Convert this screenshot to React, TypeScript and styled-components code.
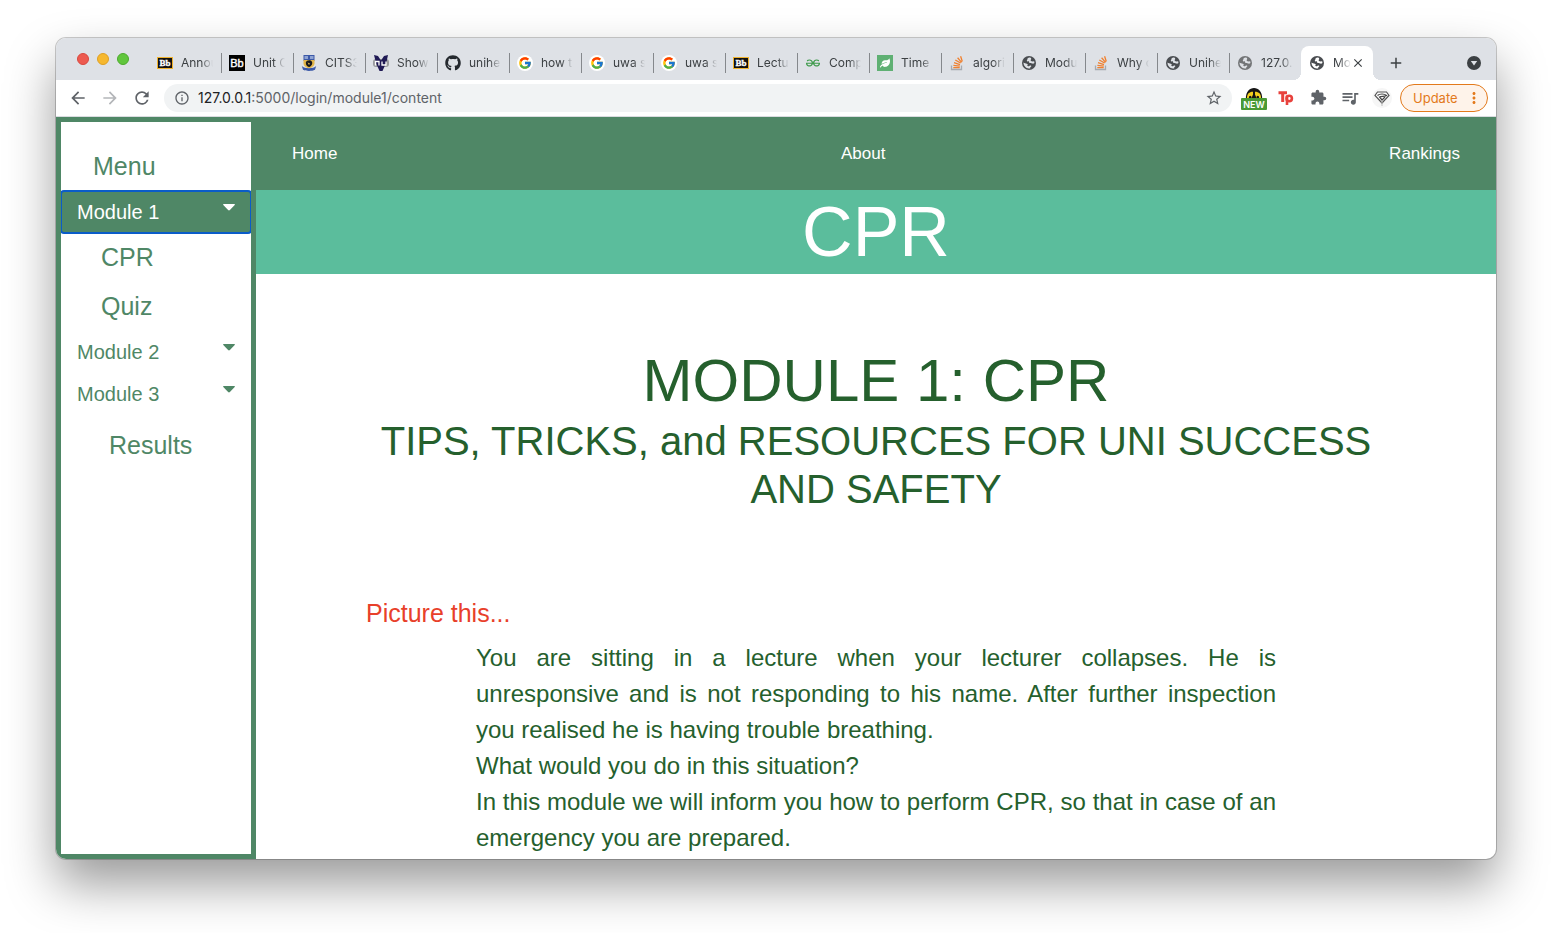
import React from "react";
import styled, { createGlobalStyle, css } from "styled-components";
import {
  MdArrowBack,
  MdArrowForward,
  MdRefresh,
  MdInfoOutline,
  MdStarBorder,
  MdExtension,
  MdQueueMusic,
  MdMoreVert,
  MdAdd,
  MdClose,
} from "react-icons/md";
import { FaGithub, FaLeaf } from "react-icons/fa";
import { FcGoogle } from "react-icons/fc";
import { SiGeeksforgeeks } from "react-icons/si";

const green = "#4f8766";
const darkGreen = "#25602d";

const GlobalStyle = createGlobalStyle`
  *, *::before, *::after { box-sizing: border-box; }
  body { margin: 0; background: #fff; font-family: "Liberation Sans", Arial, sans-serif; }
  button, input { font-family: inherit; }
  h1, h2, h3, p { margin: 0; font-weight: 400; }
`;

const Desktop = styled.div`
  display: flex;
  min-height: 100vh;
  padding: 38px 56px 74px;
`;

const Window = styled.div`
  flex: 1;
  min-width: 0;
  display: flex;
  flex-direction: column;
  overflow: hidden;
  border-radius: 10px;
  background: #fff;
  box-shadow: 0 0 0 1px rgba(0, 0, 0, 0.2), 0 25px 50px rgba(0, 0, 0, 0.4);
`;

/* Browser chrome */

const TabStrip = styled.div`
  display: flex;
  align-items: flex-end;
  height: 42px;
  padding: 0 14px 0 21px;
  background: #dee1e6;
  font-family: Inter, sans-serif;
`;

const Lights = styled.div`
  display: flex;
  gap: 8px;
  align-self: center;
  margin-right: 20px;
`;

const Light = styled.button<{ $fill: string; $edge: string }>`
  width: 12px;
  height: 12px;
  padding: 0;
  border: 1px solid ${(p) => p.$edge};
  border-radius: 50%;
  background: ${(p) => p.$fill};
`;

const Tab = styled.div<{ $active?: boolean; $first?: boolean }>`
  position: relative;
  display: flex;
  align-items: center;
  width: 72px;
  height: 34px;
  padding: 0 8px;
  color: #3c4043;
  ${(p) =>
    p.$active
      ? css`
          border-radius: 8px 8px 0 0;
          background: #fff;
          &::before,
          &::after {
            content: "";
            position: absolute;
            bottom: 0;
            width: 8px;
            height: 8px;
          }
          &::before {
            left: -8px;
            background: radial-gradient(circle at 0 0, transparent 8px, #fff 8px);
          }
          &::after {
            right: -8px;
            background: radial-gradient(circle at 100% 0, transparent 8px, #fff 8px);
          }
        `
      : !p.$first &&
        css`
          &::before {
            content: "";
            position: absolute;
            left: 0;
            top: 7px;
            width: 1px;
            height: 20px;
            background: #85888c;
          }
        `}
`;

const Favicon = styled.span`
  display: flex;
  flex: none;
  align-items: center;
  justify-content: center;
  width: 16px;
  height: 16px;
`;

const Badge = styled(Favicon)<{ $fill: string; $round?: boolean }>`
  border-radius: ${(p) => (p.$round ? 8 : 0)}px;
  background: ${(p) => p.$fill};
`;

const TabTitle = styled.button`
  flex: 1;
  min-width: 0;
  margin-left: 8px;
  padding: 0;
  border: 0;
  background: none;
  overflow: hidden;
  color: inherit;
  font-size: 12px;
  line-height: 16px;
  text-align: left;
  white-space: nowrap;
  mask-image: linear-gradient(to left, transparent, #000 12px);
`;

const IconButton = styled.button<{ $color?: string; $width?: number }>`
  display: flex;
  flex: none;
  align-items: center;
  justify-content: center;
  width: ${(p) => p.$width ?? 32}px;
  height: 28px;
  padding: 0;
  border: 0;
  background: none;
  color: ${(p) => p.$color ?? "#5f6368"};
`;

const StripButton = styled(IconButton)`
  height: 34px;
`;

const Spacer = styled.div`
  flex: 1;
`;

const Toolbar = styled.div`
  display: flex;
  align-items: center;
  height: 37px;
  padding: 0 8px 1px 6px;
  border-bottom: 1px solid #dadce0;
  font-family: Inter, sans-serif;
`;

const AddressBar = styled.div`
  display: flex;
  flex: 1;
  align-items: center;
  height: 28px;
  margin: 0 6px;
  padding: 0 2px 0 10px;
  border-radius: 14px;
  background: #f1f3f4;
  color: #5f6368;
`;

const Address = styled.div`
  flex: 1;
  margin-left: 8px;
  font-size: 14px;
  line-height: 20px;
`;

const Host = styled.span`
  color: #202124;
`;

const UpdateButton = styled.button`
  display: flex;
  align-items: center;
  justify-content: space-between;
  width: 88px;
  height: 28px;
  margin-left: 2px;
  padding: 0 4px 0 12px;
  border: 1px solid #e37a1c;
  border-radius: 14px;
  background: #fef3ea;
  color: #e37a1c;
  font-size: 13px;
`;

/* Web page */

const Page = styled.div`
  display: flex;
  flex: 1;
`;

const Sidebar = styled.nav`
  display: flex;
  flex-direction: column;
  flex: none;
  width: 200px;
  padding-top: 20px;
  border: 5px solid ${green};
  overflow: hidden;
`;

const MenuLink = styled.a<{ $indent: number }>`
  padding: 6px 8px 6px ${(p) => p.$indent}px;
  color: ${green};
  font-size: 25px;
  line-height: 37px;
  text-decoration: none;
`;

const Submenu = styled.div`
  display: flex;
  flex-direction: column;
`;

const ModuleButton = styled.button<{ $open?: boolean }>`
  display: flex;
  flex: none;
  justify-content: space-between;
  padding: 6px 16px;
  border: 0;
  border-radius: ${(p) => (p.$open ? 3 : 0)}px;
  outline: ${(p) => (p.$open ? "2px solid #0a5cc8" : "none")};
  outline-offset: -1px;
  background: ${(p) => (p.$open ? green : "transparent")};
  color: ${(p) => (p.$open ? "#fff" : green)};
  font-size: 20px;
  line-height: 30px;
`;

const CaretIcon = styled.svg`
  width: 12px;
  height: 20px;
`;

const ResultsGroup = styled.div`
  display: flex;
  flex-direction: column;
  padding-top: 6px;
`;

const Content = styled.div`
  flex: 1;
  min-width: 0;
`;

const TopNav = styled.nav`
  display: flex;
  align-items: center;
  justify-content: space-between;
  height: 73px;
  padding: 0 36px;
  background: ${green};
`;

const NavLink = styled.a`
  color: #fff;
  font-size: 17px;
  line-height: 26px;
  text-decoration: none;
`;

const Banner = styled.h1`
  background: #5bbd9c;
  color: #fff;
  font-size: 70px;
  line-height: 84px;
  text-align: center;
`;

const Article = styled.main`
  padding: 71px 110px 0;
  color: ${darkGreen};
`;

const Title = styled.h2`
  font-size: 60px;
  line-height: 72px;
  text-align: center;
`;

const Subtitle = styled.h3`
  font-size: 40px;
  line-height: 48px;
  text-align: center;
`;

const Lead = styled.p`
  margin: 85px 0 12px;
  color: #e8402a;
  font-size: 25px;
  line-height: 30px;
`;

const Scenario = styled.div`
  padding: 0 110px;
  font-size: 24px;
  line-height: 36px;
  text-align: justify;
`;

/* Favicons and extension icons */

const GlobeIcon = ({ color = "#4a4d51", land = "#dee1e6" }: { color?: string; land?: string }) => (
  <svg width="16" height="16" viewBox="0 0 16 16" aria-hidden="true">
    <circle cx="8" cy="8" r="7" fill={color} />
    <path
      d="M9.600 2.700C8.400 2.400 7.400 2.600 6.800 3.200C6 4 6.600 4.800 6 5.300C5.300 5.900 6.300 6.800 7 6.400C7.700 6 8.300 6.600 8 7.200C8.600 8.400 10.300 8.100 11.200 8.500C12.100 8.900 12.700 8.500 13.400 8.100C13.500 7.300 13.300 6.500 13 5.900C12.400 6.500 11.400 6.500 10.500 6.300C9.600 6 9.500 5.200 9.900 4.600C10.400 4 10.300 3.300 9.600 2.700Z"
      fill={land}
    />
    <path
      d="M2.500 7.600C2.400 8.700 2.700 9.700 3.200 10.600C3.800 11.500 4.500 12.200 5.200 12.700C6.600 13.500 8 13.700 9.300 13.300C8.900 12.600 9.500 12.200 10.200 11.600C10.600 10.900 9.900 10.300 9.100 10.500C8.300 10.600 8.100 11.200 7.300 11.300C6.400 11.400 6 10.700 6.500 10.100C7 9.500 6.700 8.900 5.800 8.700C4.700 8.500 3.600 8.500 2.500 7.600Z"
      fill={land}
    />
  </svg>
);

const BlackboardIcon = () => (
  <svg width="16" height="12" viewBox="0 0 16 12" aria-hidden="true">
    <rect width="16" height="12" fill="#efb22d" />
    <rect x="1" y="1" width="14" height="10" fill="#111" />
    <text x="8" y="9" textAnchor="middle" fontFamily="Liberation Serif, serif" fontWeight="700" fontSize="9" fill="#fff" stroke="#fff" strokeWidth=".3">
      Bb
    </text>
  </svg>
);

const BlackboardSquareIcon = () => (
  <svg width="16" height="16" viewBox="0 0 16 16" aria-hidden="true">
    <rect width="16" height="16" fill="#000" />
    <text x="8" y="12" textAnchor="middle" fontFamily="Liberation Sans, sans-serif" fontSize="11" fill="#fff" stroke="#fff" strokeWidth=".4">
      Bb
    </text>
  </svg>
);

const CrestIcon = () => (
  <svg width="16" height="16" viewBox="0 0 16 16" aria-hidden="true">
    <path d="M2.500 0h11v6H2.500Z" fill="#3c59a8" />
    <path d="M3.500 1h3.500v3H3.500zM9 1h3.500v3H9z" fill="#8fa3d2" />
    <path d="M2.500 5h11v3.500c0 2.500-2.500 4-5.500 5-3-1-5.500-2.500-5.500-5Z" fill="#e3b64a" />
    <path d="M4.800 7.500C5.500 5 9.500 4.500 10.800 6.500C12 8.500 10.500 11 8.500 12C6.500 12 4.600 10 4.800 7.500Z" fill="#17181c" />
    <path d="M6.500 7.500l2.500 1-1 1.500Z" fill="#e3b64a" />
    <path d="M.8 11C3.500 14 12.500 14 15.200 11L14 14.700C11 16.300 5 16.300 2 14.700Z" fill="#3c59a8" />
  </svg>
);

const NuIcon = () => (
  <svg width="16" height="16" viewBox="0 0 16 16" aria-hidden="true">
    <rect x="0" y="4" width="16" height="8" rx="3" fill="#444" opacity=".45" />
    <path d="M1 0l4 1 3 4.500L11 1l4-1-1.500 7-4 9h-3L3 8Z" fill="#201a55" />
    <path d="M2.500 10.500V6.500H6V10.500M9 6.500V10H13V6.500" fill="none" stroke="#fff" strokeWidth="1.300" />
  </svg>
);

const GoogleIcon = () => (
  <Badge $fill="#fff" $round>
    <FcGoogle size={14} />
  </Badge>
);

const LeafIcon = () => (
  <Badge $fill="#5fb073">
    <FaLeaf size={10} color="#fff" />
  </Badge>
);

const StackIcon = () => (
  <svg width="16" height="16" viewBox="0 0 16 16" fill="none" aria-hidden="true">
    <path d="M2.500 10.500v4h10v-4" stroke="#a6aab0" strokeWidth="1.300" />
    <path
      d="M4.300 12.600h6.400M4.400 10.300l6.400.8M5 7.700l6 1.900M6.300 5l5.300 3M8.600 2.800l4 4.600M11.600 1.200l1.700 5.300"
      stroke="#f0802f"
      strokeWidth="1.300"
    />
  </svg>
);

const MaskIcon = () => (
  <svg width="26" height="24" viewBox="0 0 26 24" aria-hidden="true">
    <path d="M4.800 13C4.800 5.500 8.500 2 13 2s8.200 3.500 8.200 11Z" fill="#151515" />
    <path d="M6 12C6 8 8 5.800 12 5.800V8.500L10.500 12ZM20 12C20 8 18 5.800 14 5.800V8.500L15.500 12Z" fill="#f2cf1d" />
    <path d="M7.800 12a1.400 2.200 0 0 1 2.800 0ZM15.400 12a1.400 2.200 0 0 1 2.800 0Z" fill="#151515" />
    <rect y="12" width="26" height="12" rx="1" fill="#4a9a35" />
    <text x="13" y="21.500" textAnchor="middle" fontFamily="Inter, sans-serif" fontWeight="600" fontSize="9" fill="#fff">
      NEW
    </text>
  </svg>
);

const TpIcon = () => (
  <svg width="16" height="16" viewBox="0 0 16 16" fill="none" stroke="#e8413c" aria-hidden="true">
    <path d="M.5 2.800h8.500M4.700 2.800v9.200" strokeWidth="3" />
    <path d="M9 5.500V15" strokeWidth="2.600" />
    <circle cx="11.200" cy="8.500" r="2.700" strokeWidth="2.600" />
  </svg>
);

const DiamondIcon = () => (
  <svg width="20" height="20" viewBox="0 0 20 20" aria-hidden="true">
    <circle cx="10" cy="10" r="10" fill="#f6f6f6" />
    <path d="M5.500 4h9L17 7.500 10 15 3 7.500Z" fill="#fff" stroke="#555" strokeWidth="1.200" />
    <path d="M5.500 7.500c2-2 7-2 9 0c-2 1.500-5 .5-7 1.500l2.500 3 3-3" fill="none" stroke="#444" strokeWidth="1.200" />
    <path d="M10 14v4" stroke="#bbb" strokeWidth="1" />
  </svg>
);

const TabSearchIcon = () => (
  <svg width="14" height="14" viewBox="0 0 14 14" aria-hidden="true">
    <circle cx="7" cy="7" r="7" fill="#3c4043" />
    <path d="M3.800 5h6.400L7 9.500Z" fill="#dee1e6" />
  </svg>
);

const Caret = () => (
  <CaretIcon viewBox="0 0 12 20" aria-hidden="true">
    <path d="M.7 7h10.600q1 .3.400 1.100L6.900 13q-.9.900-1.800 0L.3 8.100q-.6-.8.400-1.100Z" fill="currentColor" />
  </CaretIcon>
);

const tabs: { title: string; icon: React.ReactNode }[] = [
  { title: "Annou", icon: <BlackboardIcon /> },
  { title: "Unit O", icon: <BlackboardSquareIcon /> },
  { title: "CITS3", icon: <CrestIcon /> },
  { title: "Showi", icon: <NuIcon /> },
  { title: "unihe", icon: <FaGithub size={16} color="#24292e" /> },
  { title: "how t", icon: <GoogleIcon /> },
  { title: "uwa s", icon: <GoogleIcon /> },
  { title: "uwa s", icon: <GoogleIcon /> },
  { title: "Lectu", icon: <BlackboardIcon /> },
  { title: "Comp", icon: <SiGeeksforgeeks size={14} color="#3f9a4c" /> },
  { title: "Time a", icon: <LeafIcon /> },
  { title: "algori", icon: <StackIcon /> },
  { title: "Modu", icon: <GlobeIcon /> },
  { title: "Why c", icon: <StackIcon /> },
  { title: "Unihe", icon: <GlobeIcon /> },
  { title: "127.0.", icon: <GlobeIcon color="#737577" /> },
];

export default function App() {
  return (
    <Desktop>
      <GlobalStyle />
      <Window>
        <TabStrip>
          <Lights>
            <Light $fill="#ed5a50" $edge="#d9483f" aria-label="Close window" />
            <Light $fill="#f6b82f" $edge="#dfa023" aria-label="Minimise window" />
            <Light $fill="#61c63d" $edge="#4dab2d" aria-label="Zoom window" />
          </Lights>
          {tabs.map((tab, i) => (
            <Tab key={i} $first={i === 0}>
              <Favicon>{tab.icon}</Favicon>
              <TabTitle>{tab.title}</TabTitle>
            </Tab>
          ))}
          <Tab $active>
            <Favicon>
              <GlobeIcon land="#fff" />
            </Favicon>
            <TabTitle>Mo</TabTitle>
            <IconButton $width={14} $color="#3c4043" aria-label="Close tab">
              <MdClose size={14} />
            </IconButton>
          </Tab>
          <StripButton $width={46} $color="#3c4043" aria-label="New tab">
            <MdAdd size={18} />
          </StripButton>
          <Spacer />
          <StripButton $width={16} aria-label="Search tabs">
            <TabSearchIcon />
          </StripButton>
        </TabStrip>
        <Toolbar>
          <IconButton aria-label="Back"><MdArrowBack size={20} /></IconButton>
          <IconButton $color="#b4b6b9" aria-label="Forward"><MdArrowForward size={20} /></IconButton>
          <IconButton aria-label="Reload"><MdRefresh size={20} /></IconButton>
          <AddressBar>
            <MdInfoOutline size={16} />
            <Address>
              <Host>127.0.0.1</Host>:5000/login/module1/content
            </Address>
            <IconButton aria-label="Bookmark this page"><MdStarBorder size={18} /></IconButton>
          </AddressBar>
          <IconButton aria-label="New extension"><MaskIcon /></IconButton>
          <IconButton aria-label="Tp extension"><TpIcon /></IconButton>
          <IconButton aria-label="Extensions"><MdExtension size={17} /></IconButton>
          <IconButton aria-label="Media controls"><MdQueueMusic size={20} /></IconButton>
          <IconButton aria-label="Profile"><DiamondIcon /></IconButton>
          <UpdateButton>
            Update
            <MdMoreVert size={18} />
          </UpdateButton>
        </Toolbar>
        <Page>
          <Sidebar>
            <MenuLink href="#menu" $indent={32}>Menu</MenuLink>
            <ModuleButton $open aria-expanded="true">Module 1<Caret /></ModuleButton>
            <Submenu>
              <MenuLink href="#cpr" $indent={40}>CPR</MenuLink>
              <MenuLink href="#quiz" $indent={40}>Quiz</MenuLink>
            </Submenu>
            <ModuleButton aria-expanded="false">Module 2<Caret /></ModuleButton>
            <ModuleButton aria-expanded="false">Module 3<Caret /></ModuleButton>
            <ResultsGroup>
              <MenuLink href="#results" $indent={48}>Results</MenuLink>
            </ResultsGroup>
          </Sidebar>
          <Content>
            <TopNav>
              <NavLink href="#home">Home</NavLink>
              <NavLink href="#about">About</NavLink>
              <NavLink href="#rankings">Rankings</NavLink>
            </TopNav>
            <Banner>CPR</Banner>
            <Article>
              <Title>MODULE 1: CPR</Title>
              <Subtitle>TIPS, TRICKS, and RESOURCES FOR UNI SUCCESS AND SAFETY</Subtitle>
              <Lead>Picture this...</Lead>
              <Scenario>
                <p>
                  You are sitting in a lecture when your lecturer collapses. He is unresponsive and is not
                  responding to his name. After further inspection you realised he is having trouble breathing.
                </p>
                <p>What would you do in this situation?</p>
                <p>
                  In this module we will inform you how to perform CPR, so that in case of an emergency you are
                  prepared.
                </p>
              </Scenario>
            </Article>
          </Content>
        </Page>
      </Window>
    </Desktop>
  );
}
